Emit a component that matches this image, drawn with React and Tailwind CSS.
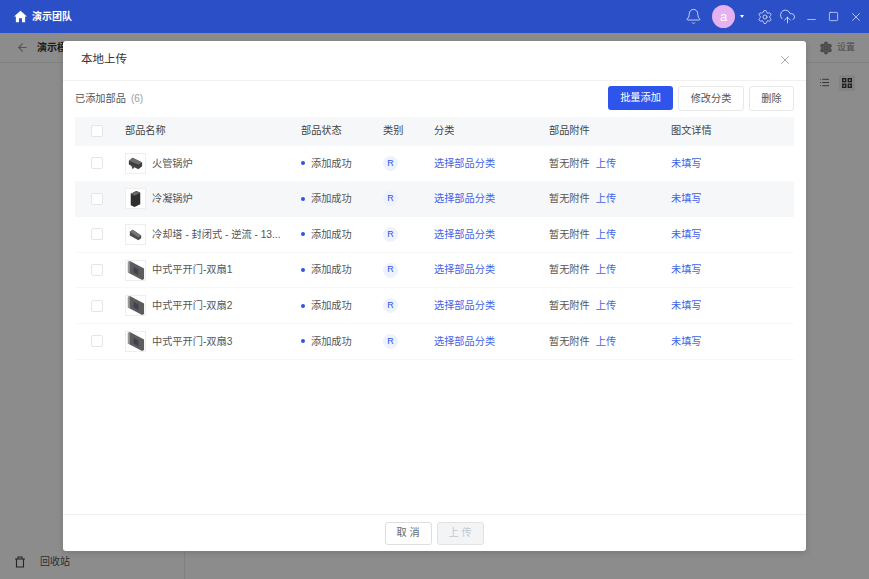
import React from "react";
import { X, ArrowLeft, Bell, Settings, CloudUpload, Minus, Square, List } from "lucide-react";

const font = { fontFamily: '"Liberation Sans","Noto Sans CJK SC",sans-serif' };

function Boiler() {
  return (
    <svg viewBox="0 0 20 20" className="w-[19px] h-[19px]">
      <path d="M3 7 L7 4 L17 9 L17 13 L13 16 L3 11 Z" fill="#3f3f3f" />
      <path d="M3 7 L7 4 L17 9 L13 11 Z" fill="#6e6e6e" />
      <path d="M5 11 L7 16 L9 14 Z" fill="#4a4a4a" />
    </svg>
  );
}
function Tower() {
  return (
    <svg viewBox="0 0 20 20" className="w-[19px] h-[19px]">
      <path d="M5 5 L11 2 L15 4 L15 16 L9 19 L5 17 Z" fill="#2f2f2f" />
      <path d="M5 5 L11 2 L15 4 L9 7 Z" fill="#666" />
    </svg>
  );
}
function Cooler() {
  return (
    <svg viewBox="0 0 20 20" className="w-[19px] h-[19px]">
      <path d="M4 7 L7 5 L16 11 L16 14 L13 16 L4 11 Z" fill="#4d4d4d" />
      <path d="M4 7 L7 5 L16 11 L13 13 Z" fill="#777" />
    </svg>
  );
}
function Door() {
  return (
    <svg viewBox="0 0 20 20" className="w-[19px] h-[19px]">
      <path d="M2 1 L4 0 L19 8 L19 19 L17 20 L2 12 Z" fill="#5c5c5c" />
      <path d="M2 1 L4 0 L4 13 L2 12 Z" fill="#999" />
      <path d="M8 6 L13 9 L13 15 L8 12 Z" fill="#3d4350" />
    </svg>
  );
}
function Bin() {
  return (
    <svg viewBox="0 0 12 12" className="w-[12px] h-[12px]" fill="none" stroke="#444" strokeWidth="1.1">
      <path d="M1 3 H11 M4 3 V1 H8 V3 M2.5 3 V11 H9.5 V3" />
    </svg>
  );
}
function Grid() {
  return (
    <svg viewBox="0 0 10 10" className="w-[10px] h-[10px]" fill="none" stroke="#3a3a3a" strokeWidth="1.4">
      <rect x="0.7" y="0.7" width="3" height="3" />
      <rect x="6.3" y="0.7" width="3" height="3" />
      <rect x="0.7" y="6.3" width="3" height="3" />
      <rect x="6.3" y="6.3" width="3" height="3" />
    </svg>
  );
}

const rows = [
  ["火管锅炉", Boiler],
  ["冷凝锅炉", Tower],
  ["冷却塔 - 封闭式 - 逆流 - 13...", Cooler],
  ["中式平开门-双扇1", Door],
  ["中式平开门-双扇2", Door],
  ["中式平开门-双扇3", Door],
];

function Check() {
  return <span className="block w-[12px] h-[12px] border border-[#e3e5e8] rounded-[2px] bg-white" />;
}

export default function App() {
  return (
    <div style={font} className="relative w-[869px] h-[579px] overflow-hidden bg-white flex flex-col">
      <header className="h-[33px] shrink-0 bg-[#2b4fc7] flex items-center pl-[14px] pr-[6px] text-white">
        <svg viewBox="0 0 14 14" className="w-[13px] h-[13px] mr-[5px]" fill="white">
          <path d="M7 .8 L14 7 H12 V13.2 H8.6 V9 H5.4 V13.2 H2 V7 H0 Z" />
        </svg>
        <span className="text-[10px] font-bold">演示团队</span>
        <div className="ml-auto flex items-center">
          <Bell size={17} strokeWidth={1.2} className="text-[#dfe5f7]" />
          <span className="ml-[10px] w-[23px] h-[23px] rounded-full bg-[#e6b1f0] flex items-center justify-center text-[13px] leading-none">a</span>
          <span className="ml-[5px] w-0 h-0 border-x-[2.5px] border-x-transparent border-t-[3px] border-t-white" />
          <Settings size={16} strokeWidth={1.2} className="ml-[13px] text-[#dfe5f7]" />
          <CloudUpload size={17} strokeWidth={1.2} className="ml-[6px] text-[#dfe5f7]" />
          <Minus size={13} strokeWidth={1.3} className="ml-[9px] mt-[6px] text-[#dfe5f7]" />
          <Square size={11} strokeWidth={1.6} className="ml-[10px] text-[#dfe5f7]" />
          <X size={14} strokeWidth={1.3} className="ml-[10px] text-[#dfe5f7]" />
        </div>
      </header>

      <div className="h-[30px] shrink-0 flex items-center pl-[16px] pr-[14px] border-b border-[#ececec]">
        <ArrowLeft size={13} className="text-[#999]" />
        <span className="ml-[8px] text-[10px] font-bold text-[#333]">演示模型库</span>
        <div className="ml-auto flex items-center text-[#888]">
          <Settings size={14} fill="#999" />
          <span className="ml-[4px] text-[9px]">设置</span>
        </div>
      </div>

      <div className="flex-1 flex min-h-0">
        <aside className="w-[185px] border-r border-[#ececec] flex flex-col justify-end">
          <div className="h-[35px] flex items-center pl-[14px] text-[#555]">
            <Bin />
            <span className="ml-[14px] text-[10px]">回收站</span>
          </div>
        </aside>
        <main className="flex-1 flex justify-end pt-[12px] pr-[14px]">
          <div className="flex items-start gap-[9px] text-[#555]">
            <List size={11} className="mt-[2px]" />
            <span className="w-[16px] h-[16px] rounded-[2px] bg-[#eee] flex items-center justify-center">
              <Grid />
            </span>
          </div>
        </main>
      </div>

      {/* scrim */}
      <div className="absolute left-0 right-0 top-[33px] bottom-0 bg-black/45" />

      {/* modal */}
      <div className="absolute left-[63px] top-[41px] w-[743px] h-[510px] bg-white rounded-[3px] flex flex-col shadow-[0_2px_6px_rgba(0,0,0,0.15)]">
        <div className="h-[40px] shrink-0 border-b border-[#f0f0f0] flex items-center pl-[18px] pr-[14px] pb-[2px]">
          <span className="text-[11.5px] text-[#333]">本地上传</span>
          <X size={14} strokeWidth={1.1} className="ml-auto text-[#777]" />
        </div>

        <div className="flex-1 min-h-0 px-[12px]">
          <div className="h-[36px] flex items-center pb-[1px]">
            <span className="text-[10.2px] text-[#555]">已添加部品</span>
            <span className="ml-[5px] text-[10px] text-[#9a9ca5]">(6)</span>
            <div className="ml-auto flex gap-[5px]">
              <button className="w-[65px] h-[24px] rounded-[3px] bg-[#2f54eb] text-white text-[10.2px]">批量添加</button>
              <button className="w-[66px] h-[25px] rounded-[3px] border border-[#e8e8e8] text-[#555] text-[10.2px]">修改分类</button>
              <button className="w-[45px] h-[25px] rounded-[3px] border border-[#e8e8e8] text-[#555] text-[10.2px]">删除</button>
            </div>
          </div>

          <div className="h-[29px] bg-[#f6f7f9] flex items-center text-[10.2px] text-[#444] pb-[1px]">
            <div className="w-[50px] pl-[16px]"><Check /></div>
            <div className="w-[176px]">部品名称</div>
            <div className="w-[82px]">部品状态</div>
            <div className="w-[51px]">类别</div>
            <div className="w-[115px]">分类</div>
            <div className="w-[122px]">部品附件</div>
            <div>图文详情</div>
          </div>

          {rows.map(([name, Icon], i) => (
            <div
              key={i}
              className={"h-[35.6px] flex items-center text-[10.2px] text-[#555] border-b " + (i === 1 ? "bg-[#f6f7f9] border-[#f6f7f9]" : "border-[#f8f8f8]")}
            >
              <div className="w-[50px] pl-[16px]"><Check /></div>
              <div className="w-[176px] flex items-center">
                <span className="w-[21px] h-[21px] shrink-0 border border-[#eeeeee] bg-white flex items-center justify-center overflow-hidden">
                  <Icon />
                </span>
                <span className="ml-[6px] whitespace-nowrap">{name}</span>
              </div>
              <div className="w-[82px] flex items-center">
                <span className="w-[4px] h-[4px] rounded-full bg-[#2f54eb]" />
                <span className="ml-[6px]">添加成功</span>
              </div>
              <div className="w-[51px]">
                <span className="w-[15px] h-[15px] rounded-full bg-[#edf2fd] text-[#2f54eb] text-[9px] flex items-center justify-center">R</span>
              </div>
              <div className="w-[115px] text-[#3f63e6]">选择部品分类</div>
              <div className="w-[122px]">
                暂无附件<span className="ml-[6px] text-[#3f63e6]">上传</span>
              </div>
              <div className="text-[#3f63e6]">未填写</div>
            </div>
          ))}
        </div>

        <div className="h-[37px] shrink-0 border-t border-[#f0f0f0] flex items-center justify-center gap-[5px] pr-[1px]">
          <button className="w-[47px] h-[23px] rounded-[3px] border border-[#dedede] text-[#666] text-[10.2px]">取 消</button>
          <button className="w-[47px] h-[23px] rounded-[3px] border border-[#e2e2e2] bg-[#f3f4f5] text-[#c2c8d0] text-[10.2px]">上 传</button>
        </div>
      </div>
    </div>
  );
}
